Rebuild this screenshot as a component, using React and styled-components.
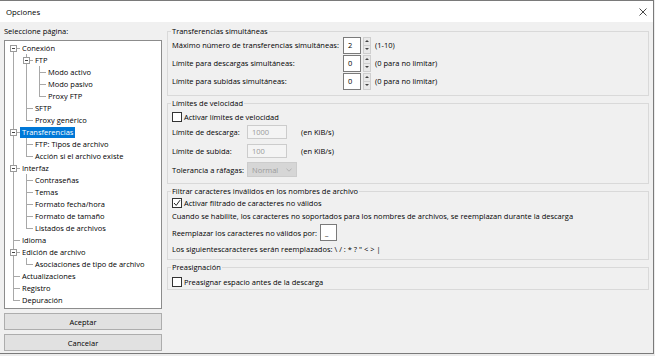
import React from 'react'
import styled, { createGlobalStyle } from 'styled-components'

const GlobalStyle = createGlobalStyle`
  html, body {
    margin: 0;
    padding: 0;
    background: #ececec;
  }
  body {
    font-family: "Open Sans", "Noto Sans", sans-serif;
    font-size: 7.5px;
    color: #000;
  }
`

const treeItems = [
  { label: 'Conexión', level: 0, open: true },
  { label: 'FTP', level: 1, open: true },
  { label: 'Modo activo', level: 2 },
  { label: 'Modo pasivo', level: 2 },
  { label: 'Proxy FTP', level: 2 },
  { label: 'SFTP', level: 1 },
  { label: 'Proxy genérico', level: 1 },
  { label: 'Transferencias', level: 0, open: true, selected: true },
  { label: 'FTP: Tipos de archivo', level: 1 },
  { label: 'Acción si el archivo existe', level: 1 },
  { label: 'Interfaz', level: 0, open: true },
  { label: 'Contraseñas', level: 1 },
  { label: 'Temas', level: 1 },
  { label: 'Formato fecha/hora', level: 1 },
  { label: 'Formato de tamaño', level: 1 },
  { label: 'Listados de archivos', level: 1 },
  { label: 'Idioma', level: 0 },
  { label: 'Edición de archivo', level: 0, open: true },
  { label: 'Asociaciones de tipo de archivo', level: 1 },
  { label: 'Actualizaciones', level: 0 },
  { label: 'Registro', level: 0 },
  { label: 'Depuración', level: 0 },
]

// is the node the last one among its siblings?
const isLastAt = (i) => {
  const lvl = treeItems[i].level
  for (let j = i + 1; j < treeItems.length; j++) {
    if (treeItems[j].level < lvl) return true
    if (treeItems[j].level === lvl) return false
  }
  return true
}

const ancestorIndex = (i, lvl) => {
  for (let j = i - 1; j >= 0; j--) {
    if (treeItems[j].level === lvl) return j
  }
  return -1
}

const buildGuides = (i) => {
  const item = treeItems[i]
  const guides = []
  for (let l = 0; l < item.level; l++) {
    const a = ancestorIndex(i, l)
    guides.push({ line: isLastAt(a) ? 'none' : 'full', branch: false })
  }
  const last = isLastAt(i)
  let line = last ? 'top' : 'full'
  if (i === 0) line = last ? 'none' : 'bottom'
  guides.push({ line, branch: true, expander: item.open })
  return guides
}

const Window = styled.div`
  width: 654px;
  height: 354px;
  box-sizing: border-box;
  border: 1px solid #7a7a7a;
  border-left: none;
  background: #f0f0f0;
  display: flex;
  flex-direction: column;
`

const TitleBar = styled.div`
  height: 21px;
  flex: 0 0 21px;
  background: #fff;
  display: flex;
  align-items: center;
  justify-content: space-between;
  padding: 0 6px 0 6px;
  font-size: 7.8px;
`

const CloseIcon = () => (
  <svg width="8" height="8" viewBox="0 0 8 8">
    <path d="M0.5 0.5 L7.5 7.5 M7.5 0.5 L0.5 7.5" stroke="#333" strokeWidth="0.9" fill="none" />
  </svg>
)

const Body = styled.div`
  flex: 1;
  display: flex;
  gap: 5px;
  padding: 4px 4px 0 4px;
`

const Sidebar = styled.div`
  width: 158px;
  flex: 0 0 158px;
  display: flex;
  flex-direction: column;
`

const Caption = styled.div`
  height: 10px;
  line-height: 10px;
  margin-bottom: 4px;
`

const TreeBox = styled.div`
  height: 269px;
  box-sizing: border-box;
  border: 1px solid #8c8c8c;
  background: #fff;
  padding: 1px 0 0 2px;
  overflow: hidden;
`

const Row = styled.div`
  display: flex;
  align-items: center;
  height: 12px;
`

const Guide = styled.span`
  position: relative;
  flex: 0 0 13px;
  align-self: stretch;
  display: flex;
  align-items: center;
  justify-content: center;

  &::before {
    content: '';
    display: ${(p) => (p.$line === 'none' ? 'none' : 'block')};
    position: absolute;
    left: 6px;
    width: 1px;
    top: ${(p) => (p.$line === 'bottom' ? '6px' : '0')};
    bottom: ${(p) => (p.$line === 'top' ? '6px' : '0')};
    background: #a8a8a8;
  }

  &::after {
    content: '';
    display: ${(p) => (p.$branch ? 'block' : 'none')};
    position: absolute;
    left: 6px;
    right: 0;
    top: 6px;
    height: 1px;
    background: #a8a8a8;
  }
`

const Expander = styled.span`
  position: relative;
  z-index: 1;
  width: 7px;
  height: 7px;
  box-sizing: border-box;
  border: 1px solid #9a9a9a;
  background: #fff;
  display: flex;
  align-items: center;
  justify-content: center;

  &::after {
    content: '';
    width: 3px;
    height: 1px;
    background: #444;
  }
`

const NodeLabel = styled.span`
  padding: 0 2px;
  height: 11px;
  line-height: 11px;
  white-space: nowrap;
  background: ${(p) => (p.$selected ? '#0078d7' : 'transparent')};
  color: ${(p) => (p.$selected ? '#fff' : '#000')};
`

const Button = styled.button`
  height: 17px;
  margin-top: 4px;
  box-sizing: border-box;
  border: 1px solid #adadad;
  background: #e1e1e1;
  font-family: inherit;
  font-size: 7.5px;
  color: #000;
  padding: 0;
`

const Content = styled.div`
  flex: 1;
  display: flex;
  flex-direction: column;
  gap: 2px;
`

const Group = styled.fieldset`
  margin: 0;
  padding: 0 4px ${(p) => p.$pb}px 4px;
  border: 1px solid #d9d9d9;
  min-width: 0;
`

const Legend = styled.legend`
  padding: 0 1px;
  margin-left: -1px;
  height: 10px;
  line-height: 10px;
`

const Stack = styled.div`
  display: flex;
  flex-direction: column;
  gap: ${(p) => p.$gap || 0}px;
  margin-top: ${(p) => p.$mt || 0}px;
`

const FieldGrid = styled.div`
  display: grid;
  grid-template-columns: ${(p) => p.$cols};
  grid-auto-rows: ${(p) => p.$row}px;
  align-items: center;
`

const Text = styled.div`
  height: 10px;
  line-height: 10px;
  white-space: nowrap;
`

const Suffix = styled.span`
  margin-left: 4px;
  white-space: nowrap;
`

const SpinBox = styled.div`
  display: flex;
  align-items: center;
`

const Input = styled.div`
  width: ${(p) => p.$w}px;
  height: ${(p) => p.$h}px;
  box-sizing: border-box;
  border: 1px solid ${(p) => (p.$disabled ? '#cccccc' : '#7a7a7a')};
  background: ${(p) => (p.$disabled ? '#f4f4f4' : '#fff')};
  color: ${(p) => (p.$disabled ? '#9a9a9a' : '#000')};
  padding-left: 4px;
  display: flex;
  align-items: center;
`

const Spinner = styled.div`
  width: 8px;
  height: 17px;
  margin-left: 2px;
  box-sizing: border-box;
  border: 1px solid #cfcfcf;
  background: #e9e9e9;
  display: flex;
  flex-direction: column;
`

const SpinHalf = styled.span`
  flex: 1;
  display: flex;
  align-items: center;
  justify-content: center;

  & + & {
    border-top: 1px solid #cfcfcf;
  }

  &::after {
    content: '';
    border-left: 2px solid transparent;
    border-right: 2px solid transparent;
    ${(p) => (p.$down ? 'border-top: 2px solid #444;' : 'border-bottom: 2px solid #444;')}
  }
`

const Select = styled.div`
  width: 50px;
  height: 15px;
  box-sizing: border-box;
  border: 1px solid #cccccc;
  background: #d6d6d6;
  color: #9a9a9a;
  padding: 0 4px;
  display: flex;
  align-items: center;
  justify-content: space-between;
`

const CheckRow = styled.label`
  display: flex;
  align-items: center;
  gap: 2px;
  height: 10px;
  white-space: nowrap;
`

const Box = styled.span`
  width: 10px;
  height: 10px;
  box-sizing: border-box;
  border: 1px solid #333;
  background: #fff;
  display: flex;
  align-items: center;
  justify-content: center;
`

const InlineRow = styled.div`
  display: flex;
  align-items: center;
  gap: 3px;
  height: 17px;
  white-space: nowrap;
`

const Check = ({ checked, children }) => (
  <CheckRow>
    <Box>
      {checked && (
        <svg width="8" height="8" viewBox="0 0 8 8">
          <polyline points="1,4 3.2,6.4 7,1.2" fill="none" stroke="#222" strokeWidth="1" />
        </svg>
      )}
    </Box>
    {children}
  </CheckRow>
)

const Spin = ({ value }) => (
  <SpinBox>
    <Input $w={18} $h={17}>{value}</Input>
    <Spinner>
      <SpinHalf />
      <SpinHalf $down />
    </Spinner>
  </SpinBox>
)

const Chevron = () => (
  <svg width="6" height="4" viewBox="0 0 6 4">
    <polyline points="0.5,0.8 3,3.2 5.5,0.8" fill="none" stroke="#a8a8a8" strokeWidth="0.8" />
  </svg>
)

const App = () => {
  return (
    <>
      <GlobalStyle />
      <Window>
        <TitleBar>
          <span>Opciones</span>
          <CloseIcon />
        </TitleBar>
        <Body>
          <Sidebar>
            <Caption>Seleccione página:</Caption>
            <TreeBox>
              {treeItems.map((item, i) => (
                <Row key={item.label}>
                  {buildGuides(i).map((g, k) => (
                    <Guide key={k} $line={g.line} $branch={g.branch}>
                      {g.expander && <Expander />}
                    </Guide>
                  ))}
                  <NodeLabel $selected={item.selected}>{item.label}</NodeLabel>
                </Row>
              ))}
            </TreeBox>
            <Button>Aceptar</Button>
            <Button>Cancelar</Button>
          </Sidebar>

          <Content>
            <Group $pb={5}>
              <Legend>Transferencias simultáneas</Legend>
              <FieldGrid $cols="171px auto 1fr" $row={18}>
                <span>Máximo número de transferencias simultáneas:</span>
                <Spin value="2" />
                <Suffix>(1-10)</Suffix>
                <span>Límite para descargas simultáneas:</span>
                <Spin value="0" />
                <Suffix>(0 para no limitar)</Suffix>
                <span>Límite para subidas simultáneas:</span>
                <Spin value="0" />
                <Suffix>(0 para no limitar)</Suffix>
              </FieldGrid>
            </Group>

            <Group $pb={4}>
              <Legend>Límites de velocidad</Legend>
              <Stack $mt={4}>
                <Check>Activar límites de velocidad</Check>
                <FieldGrid $cols="75px auto 1fr" $row={19}>
                  <span>Límite de descarga:</span>
                  <Input $w={40} $h={14} $disabled>1000</Input>
                  <Suffix>(en KiB/s)</Suffix>
                  <span>Límite de subida:</span>
                  <Input $w={40} $h={14} $disabled>100</Input>
                  <Suffix>(en KiB/s)</Suffix>
                  <span>Tolerancia a ráfagas:</span>
                  <Select>
                    <span>Normal</span>
                    <Chevron />
                  </Select>
                  <span />
                </FieldGrid>
              </Stack>
            </Group>

            <Group $pb={5}>
              <Legend>Filtrar caracteres inválidos en los nombres de archivo</Legend>
              <Stack $mt={2} $gap={3}>
                <Check checked>Activar filtrado de caracteres no válidos</Check>
                <Text>
                  Cuando se habilite, los caracteres no soportados para los nombres de archivos, se reemplazan durante la descarga
                </Text>
                <InlineRow>
                  <span>Reemplazar los caracteres no válidos por:</span>
                  <Input $w={17} $h={17}>_</Input>
                </InlineRow>
                <Text>Los siguientescaracteres serán reemplazados: \ / : * ? " &lt; &gt; |</Text>
              </Stack>
            </Group>

            <Group $pb={2}>
              <Legend>Preasignación</Legend>
              <Stack $mt={5}>
                <Check>Preasignar espacio antes de la descarga</Check>
              </Stack>
            </Group>
          </Content>
        </Body>
      </Window>
    </>
  )
}

export default App
